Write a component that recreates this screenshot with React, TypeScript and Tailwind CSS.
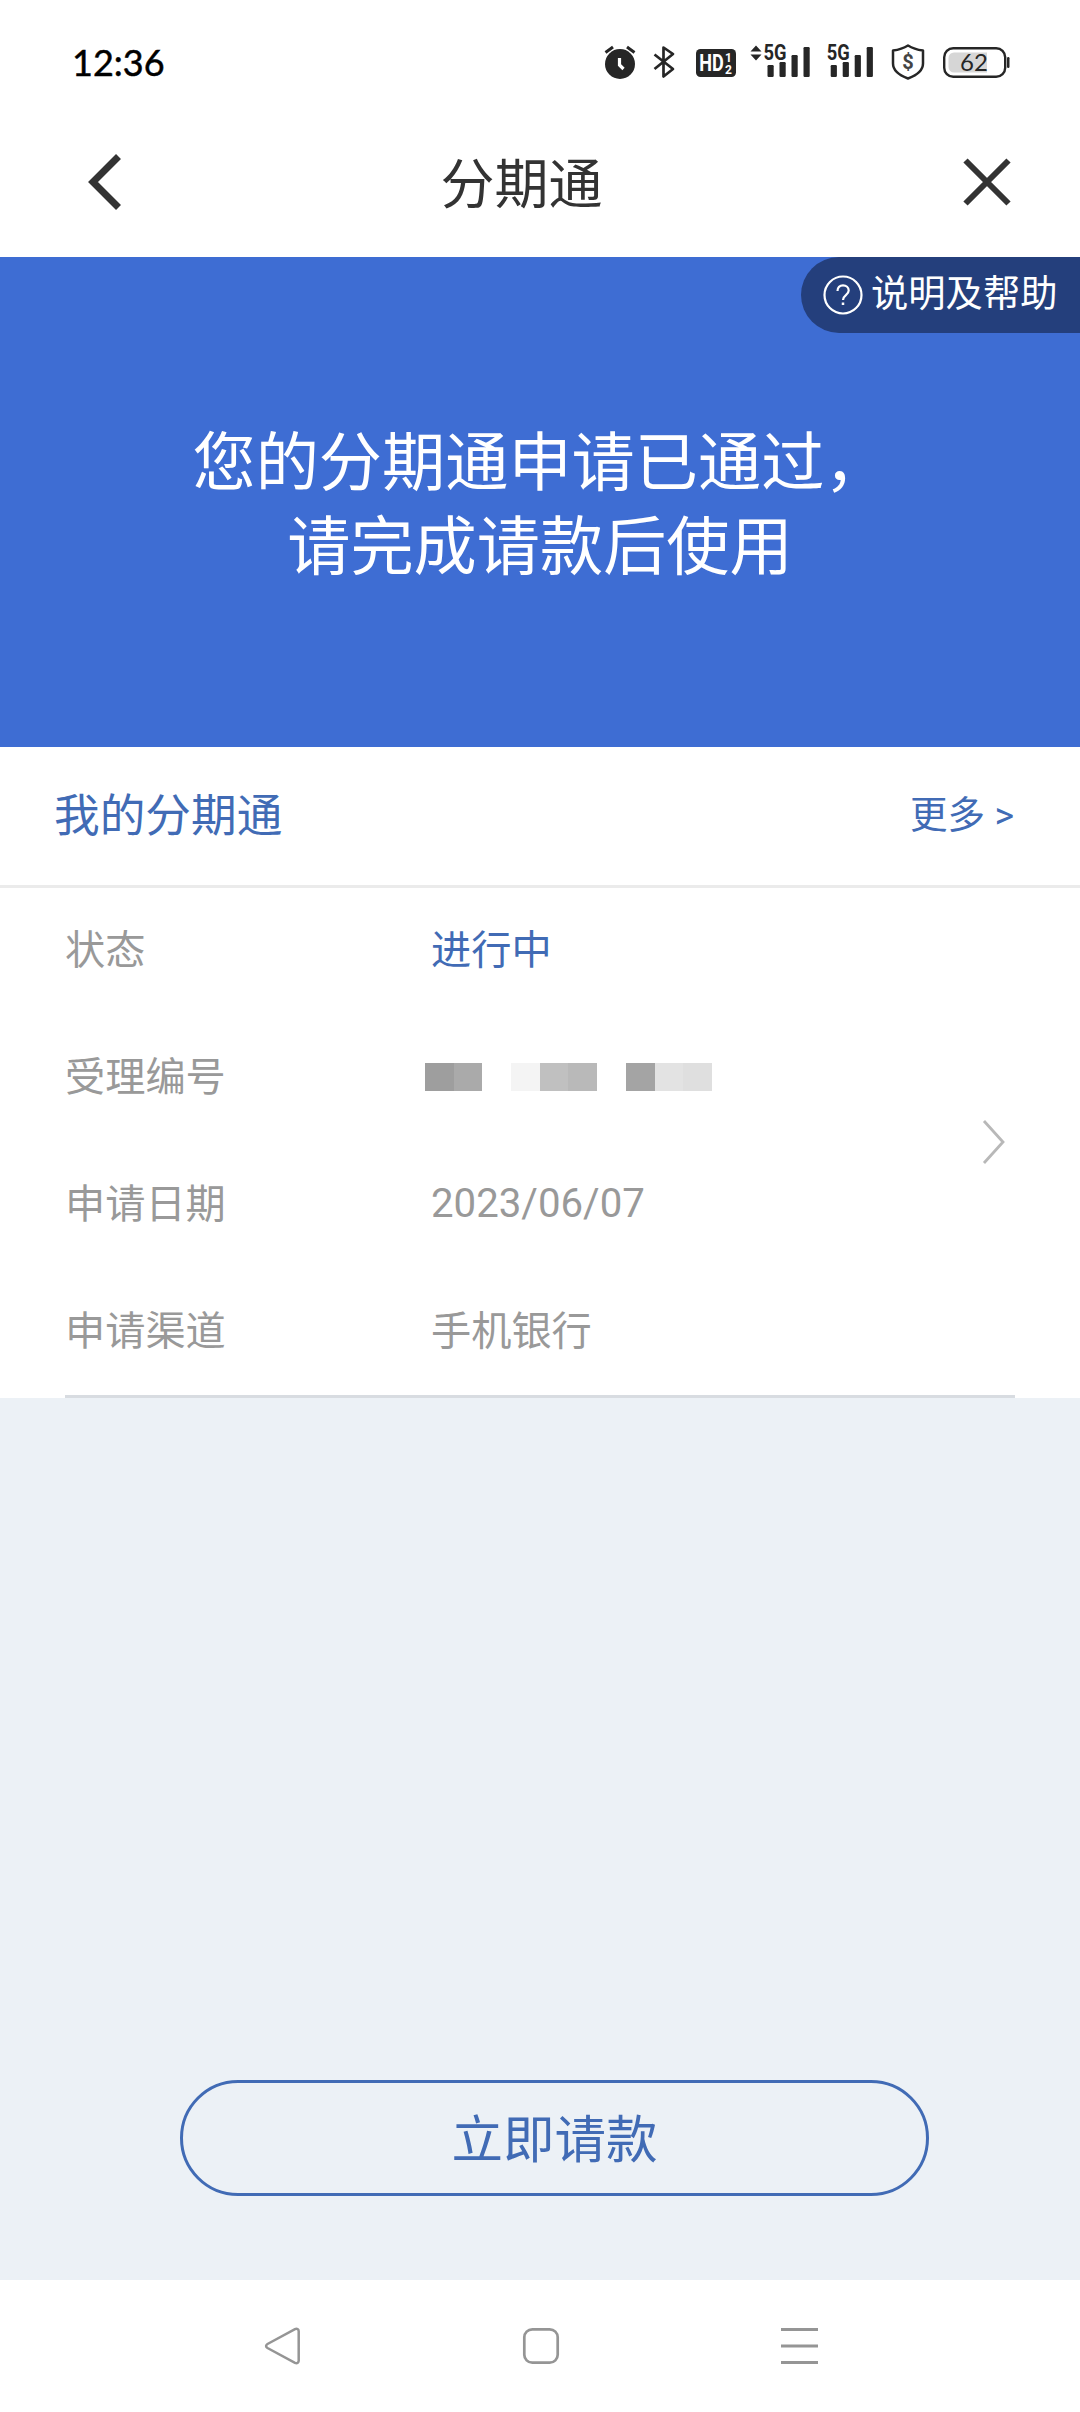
import React from 'react';

const mosaic = [
  'bg-[#9e9e9e]',
  'bg-[#aaaaaa]',
  'bg-transparent',
  'bg-[#f4f4f4]',
  'bg-[#c0c0c0]',
  'bg-[#b9b9b9]',
  'bg-transparent',
  'bg-[#a4a4a4]',
  'bg-[#e3e3e3]',
  'bg-[#dfdfdf]',
];

function SignalBars({ x }: { x: number }) {
  return (
    <>
      <text x={x - 4} y="22" fontFamily="Roboto" fontSize="21.5" fontWeight="700" textLength="23" lengthAdjust="spacingAndGlyphs">5G</text>
      <rect x={x} y="27" width="6.2" height="12" rx="1.2" />
      <rect x={x + 12} y="24" width="6.2" height="15" rx="1.2" />
      <rect x={x + 24} y="17" width="6.2" height="22" rx="1.2" />
      <rect x={x + 36} y="9" width="6.2" height="30" rx="1.2" />
    </>
  );
}

function StatusBar() {
  return (
    <div className="flex h-[124px] items-center justify-between pl-[72px] pr-[70px]">
      <span className="font-[Lato,sans-serif] text-[36px] leading-none text-black [-webkit-text-stroke:0.5px_black]">12:36</span>
      <div className="flex items-center text-[#262626]">
        <svg width="32" height="36" viewBox="0 0 32 36" fill="currentColor">
          <circle cx="16" cy="20" r="15" />
          <path d="M1.5 8.5 9 3M30.5 8.5 23 3" stroke="currentColor" strokeWidth="3" />
          <path d="M15.5 14v7l4 4" fill="none" stroke="#fff" strokeWidth="3.2" />
        </svg>
        <svg className="ml-[17px]" width="23" height="36" viewBox="0 0 23 36" fill="none" stroke="currentColor" strokeWidth="2.7">
          <path d="M1.5 10.5 20 25l-9.500 7.500V3.500L20 10 1.500 25" strokeLinejoin="round" />
        </svg>
        <svg className="ml-[20px]" width="40" height="36" viewBox="0 0 40 36" fill="#fff" fontFamily="Roboto" fontWeight="700">
          <rect y="5" width="40" height="28" rx="4.5" fill="#262626" />
          <text x="3.2" y="26.8" fontSize="23" textLength="24.5" lengthAdjust="spacingAndGlyphs">HD</text>
          <text x="29" y="17.6" fontSize="12">1</text>
          <text x="29" y="29.8" fontSize="12">2</text>
        </svg>
        <svg className="ml-[14px]" width="61" height="48" viewBox="0 0 61 48" fill="currentColor">
          <path d="M.5 13.5 6 7.5l5.500 6zM.5 16.500l5.500 6 5.500-6z" />
          <SignalBars x={17.5} />
        </svg>
        <svg className="ml-[15px]" width="48" height="48" viewBox="0 0 48 48" fill="currentColor">
          <SignalBars x={4.7} />
        </svg>
        <svg className="ml-[17px]" width="34" height="36" viewBox="0 0 34 36">
          <path d="M17 1.500c4 2.600 9 4.300 15 5v13c0 7-7 12-15 15C9 31.500 2 26.500 2 19.500v-13c6-.7 11-2.400 15-5z" fill="none" stroke="currentColor" strokeWidth="2.5" strokeLinejoin="round" />
          <text x="17" y="25" textAnchor="middle" fontFamily="Roboto" fontSize="20" fontWeight="700" fill="#444">$</text>
        </svg>
        <svg className="ml-[17px]" width="68" height="36" viewBox="0 0 68 36">
          <rect x="2.2" y="4.2" width="61" height="28.6" rx="9" fill="none" stroke="currentColor" strokeWidth="2.4" />
          <path d="M12 8.500h33v20H12a5.500 5.500 0 0 1-5.500-5.500v-9A5.500 5.500 0 0 1 12 8.500z" fill="#d6d6d6" />
          <rect x="65" y="13" width="2.5" height="11" rx="1.2" fill="currentColor" />
          <text x="32" y="27" textAnchor="middle" fontFamily="Lato" fontSize="24" fill="currentColor">62</text>
        </svg>
      </div>
    </div>
  );
}

function TitleBar() {
  return (
    <div className="flex h-[133px] items-center justify-between pb-[17px] pl-[87px] pr-[68px] text-[#333333]">
      <svg width="36" height="58" viewBox="0 0 36 58" fill="none" stroke="currentColor" strokeWidth="7">
        <path d="M31.5 3.5 6 29l25.500 25.500" />
      </svg>
      <h1 className="-ml-[42px] pt-[7px] text-[54px] leading-none">分期通</h1>
      <svg width="50" height="50" viewBox="0 0 50 50" fill="none" stroke="currentColor" strokeWidth="6">
        <path d="m3.5 3.5 43 43M46.500 3.500l-43 43" />
      </svg>
    </div>
  );
}

function Row({ label, children }: { label: string; children: React.ReactNode }) {
  return (
    <div className="flex h-[127px] items-center text-[40.2px] text-[#999999]">
      <span className="w-[366px]">{label}</span>
      {children}
    </div>
  );
}

function App() {
  return (
    <div className="flex h-[2412px] w-[1080px] flex-col overflow-hidden bg-white font-[Roboto,'Noto_Sans_CJK_SC',sans-serif]">
      <StatusBar />
      <TitleBar />

      <section className="relative h-[490px] bg-[#3e6dd3] text-white">
        <div className="absolute right-0 top-0 flex h-[76px] w-[279px] items-center rounded-l-full bg-[#243f7c] pl-[22px]">
          <svg width="40" height="40" viewBox="0 0 40 40" fill="none" stroke="currentColor" strokeWidth="2.2">
            <circle cx="20" cy="20" r="18.5" />
            <path d="M14.5 16c0-3.500 2.300-5.700 5.500-5.700s5.700 2.100 5.700 5.200c0 4.700-5.700 4.500-5.700 9.500" />
            <path d="M20 27.5v2.500" strokeWidth="2.5" />
          </svg>
          <span className="ml-[8px] whitespace-nowrap text-[37.3px] leading-none">说明及帮助</span>
        </div>
        <p className="pt-[165px] text-center text-[63.2px] leading-[83.5px]">
          您的分期通申请已通过，
          <br />
          请完成请款后使用
        </p>
      </section>

      <section>
        <div className="flex h-[141px] items-center justify-between border-b-[3px] border-[#ebebeb] pl-[54px] pr-[66px] text-[#416bb5]">
          <h2 className="pt-[2px] text-[45.7px]">我的分期通</h2>
          <span className="pb-[2px] text-[37.5px]">更多 &gt;</span>
        </div>
        <div className="mx-[65px] flex h-[510px] items-center border-b-[3px] border-[#d8dce1]">
          <div className="flex-1">
            <Row label="状态">
              <span className="text-[#416bb5]">进行中</span>
            </Row>
            <Row label="受理编号">
              <div className="-ml-[6px] flex pb-[2px]">
                {mosaic.map((color, i) => (
                  <span key={i} className={`h-[28px] w-[28.7px] ${color}`} />
                ))}
              </div>
            </Row>
            <Row label="申请日期">
              <span className="pb-[1px]">2023/06/07</span>
            </Row>
            <Row label="申请渠道">手机银行</Row>
          </div>
          <svg className="mr-[10px]" width="23" height="46" viewBox="0 0 23 46" fill="none" stroke="#b8b8b8" strokeWidth="2.8">
            <path d="m2 2 19 21L2 44" />
          </svg>
        </div>
      </section>

      <main className="flex h-[882px] flex-col justify-end bg-[#ecf1f6] pb-[84px] pl-[180px]">
        <button className="h-[116px] w-[749px] rounded-full border-[3px] border-[#416bb5] pt-[6px] text-[51.5px] leading-none text-[#416bb5]">
          立即请款
        </button>
      </main>

      <nav className="flex flex-1 items-center justify-between pl-[264px] pr-[262px] text-[#959595]">
        <svg width="37" height="40" viewBox="0 0 37 40" fill="none" stroke="currentColor" strokeWidth="2.5">
          <path d="M3.500 18 31 3.200c2-.9 3.700.1 3.700 2v29.600c0 1.900-1.700 2.900-3.700 2L3.500 22c-1.900-1.200-1.900-2.800 0-4z" />
        </svg>
        <svg width="38" height="38" viewBox="0 0 38 38" fill="none" stroke="currentColor" strokeWidth="2.7">
          <rect x="2.3" y="2.3" width="33.4" height="33.4" rx="8" />
        </svg>
        <svg width="37" height="38" viewBox="0 0 37 38" fill="none" stroke="currentColor" strokeWidth="3">
          <path d="M0 2.500h37M0 19h37M0 35.500h37" />
        </svg>
      </nav>
    </div>
  );
}

export default App;
